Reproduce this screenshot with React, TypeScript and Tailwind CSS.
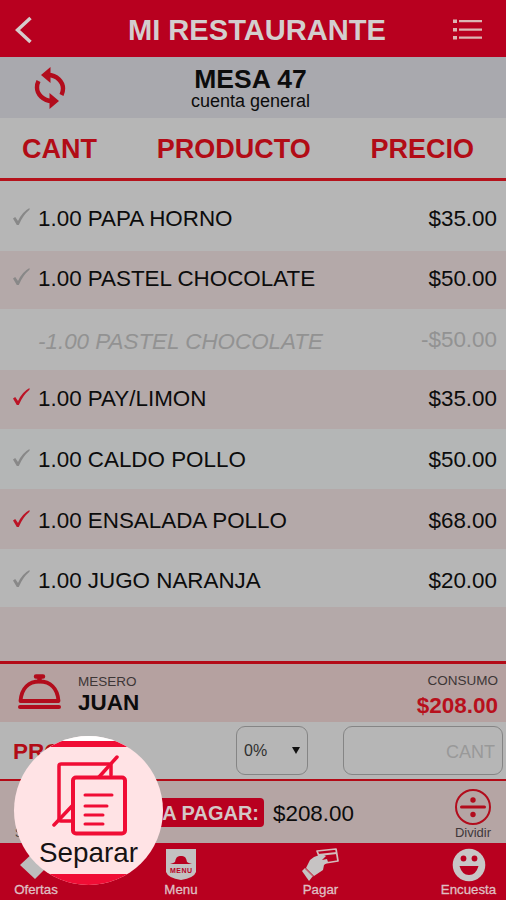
import { clsx } from "clsx"

type Item = {
    name: string
    price: string
    status: "pending" | "done" | "cancelled"
    row: string
}

const items: Item[] = [
    { name: "1.00 PAPA HORNO", price: "$35.00", status: "pending", row: "h-[70px] pt-[23px] bg-[#b6b6b6]" },
    { name: "1.00 PASTEL CHOCOLATE", price: "$50.00", status: "pending", row: "h-[58px] pt-[13px] bg-[#b4a9a9]" },
    { name: "-1.00 PASTEL CHOCOLATE", price: "-$50.00", status: "cancelled", row: "h-[61px] pt-[16px] bg-[#b6b6b6]" },
    { name: "1.00 PAY/LIMON", price: "$35.00", status: "done", row: "h-[59px] pt-[14px] bg-[#b4a9a9]" },
    { name: "1.00 CALDO POLLO", price: "$50.00", status: "pending", row: "h-[60px] pt-[16px] bg-[#b4b6b6]" },
    { name: "1.00 ENSALADA POLLO", price: "$68.00", status: "done", row: "h-[60px] pt-[17px] bg-[#b4a9a9]" },
    { name: "1.00 JUGO NARANJA", price: "$20.00", status: "pending", row: "h-[58px] pt-[17px] bg-[#b6b6b6]" },
]

const BackIcon = () => (
    <svg width="18" height="28" viewBox="0 0 18 28" fill="none" stroke="#d5cccc" strokeWidth="3.500">
        <path d="M15.500 2 2.500 14 15.500 26" />
    </svg>
)

const ListIcon = () => (
    <svg width="30" height="22" viewBox="0 0 30 22" fill="#dcb5b3">
        <path d="M0 0.500h4v3.500H0zM0 9h4v3.500H0zM0 17h4v3.500H0zM6 1h23v2.200H6zM6 9.500h23v2.200H6zM6 17.500h23v2.200H6z" />
    </svg>
)

const SyncIcon = () => (
    <svg width="32" height="42" viewBox="0 0 32 42" fill="none" stroke="#b20c1c" strokeWidth="4.400">
        <path d="M14 8C23 8 29 15 29 21.500Q29 25 27.500 28" />
        <path d="M18 34C9 34 3 27 3 20.500Q3 17 4.500 14" />
        <path d="M7 8 16.500 0v16z" fill="#b20c1c" stroke="none" />
        <path d="M25 34 15.500 26v16z" fill="#b20c1c" stroke="none" />
    </svg>
)

const CheckIcon = ({ active }: { active: boolean }) => (
    <svg width="17" height="18" viewBox="0 0 17 18" fill={active ? "#bb1426" : "#888"}>
        <path d="M0 10.500 2.200 9 5 13Q9 4 16.500 0L16.500 1.800Q10 7 5.800 17H3.800Z" />
    </svg>
)

const BellIcon = () => (
    <svg width="44" height="36" viewBox="0 0 44 36" fill="none" stroke="#b20c1c" strokeWidth="3.800" strokeLinecap="round">
        <path d="M3.500 27C4.500 14 12 7.500 22.500 7.500S40.500 14 41.500 27Z" strokeLinejoin="round" />
        <path d="M3 33h39" strokeWidth="4" />
        <path d="M19 2.500h7M22.500 3v4" strokeWidth="4.500" />
    </svg>
)

const DivideIcon = () => (
    <svg width="36" height="36" viewBox="0 0 36 36" fill="none" stroke="#b20c1c">
        <circle cx="18" cy="18" r="17" strokeWidth="2" />
        <path d="M6.500 18h23" strokeWidth="3" strokeLinecap="round" />
        <circle cx="18" cy="11" r="2.700" fill="#b20c1c" stroke="none" />
        <circle cx="18" cy="25.500" r="2.700" fill="#b20c1c" stroke="none" />
    </svg>
)

const SplitIcon = () => (
    <svg width="76" height="82" viewBox="0 0 76 82" fill="none" stroke="#f00d35" strokeWidth="3.500" strokeLinecap="round">
        <path d="M59 20V10.500Q59 9 57 9H9Q7 9 7 11V64Q7 66 9 66H20" />
        <path d="M47 22 65 2M20 51 2 70" strokeWidth="3.500" />
        <rect x="21" y="22.500" width="52" height="56" rx="3" strokeWidth="4" />
        <path d="M33 40H60M33 51H55M33 60H51M33 69H51" strokeWidth="3" />
    </svg>
)

const OffersIcon = () => (
    <svg width="32" height="32" viewBox="0 0 32 32" fill="#bdbdbd">
        <path d="M15 3 29 17 15 31 0 17Z" />
    </svg>
)

const MenuIcon = () => (
    <svg width="32" height="34" viewBox="0 0 32 34">
        <path d="M1 1h30v23q-2 6-15 8Q3 30 1 24Z" fill="#c3c1c1" />
        <path d="M5 16q4-1 5-2 1-7 6-6 5-1 6 6 1 1 5 2Z" fill="#b8001f" />
        <text x="16" y="24.500" textAnchor="middle" textLength="22" fontFamily="Liberation Sans, sans-serif" fontSize="7" fontWeight="700" fill="#b8001f">
            MENU
        </text>
    </svg>
)

const PayIcon = () => (
    <svg width="38" height="34" viewBox="0 0 38 34" fill="none">
        <path d="M15 3 34 1 36 13 20 15.500Z" stroke="#d4bcbc" strokeWidth="1.700" strokeLinejoin="round" />
        <path d="M16 7 35 5" stroke="#d4bcbc" strokeWidth="2" />
        <path d="M4 20 8 12 12 9 20 6 24 8 20 12 25 11 26 14 22 17 21 22 12 28Z" fill="#c6c3c3" />
        <path d="M3 20 11 28 7 33 0 23Z" fill="#c6c3c3" />
        <path d="M3 20.500 11 28.500" stroke="#c45a68" />
    </svg>
)

const SmileIcon = () => (
    <svg width="34" height="34" viewBox="0 0 34 34" fill="#b8001f">
        <circle cx="17" cy="17" r="16.300" fill="#c8c6c6" />
        <circle cx="11.500" cy="10.500" r="2.900" />
        <circle cx="22.500" cy="10.500" r="2.900" />
        <path d="M7.500 18h19q-2.500 9-9.500 9t-9.500-9Z" />
    </svg>
)

const ItemRow = ({ item }: { item: Item }) => (
    <div className={clsx("flex shrink-0 pl-[13px] pr-[9px] text-[22.4px] leading-[29px]", item.row)}>
        <div className="w-[25px] shrink-0 pt-[4px]">
            {item.status !== "cancelled" && <CheckIcon active={item.status === "done"} />}
        </div>
        <span
            className={clsx(
                "flex-1 whitespace-nowrap",
                item.status === "cancelled" ? "pt-[2px] text-[#929292] italic" : "text-[#0c0c0c]"
            )}
        >
            {item.name}
        </span>
        <span className={item.status === "cancelled" ? "text-[#929292]" : "text-[#0c0c0c]"}>{item.price}</span>
    </div>
)

const App = () => {
    return (
        <div className="relative flex h-[900px] w-[506px] flex-col overflow-hidden bg-[#b6b6b6] font-['Liberation_Sans',Arial,sans-serif] text-[#0c0c0c]">
            <header className="flex h-[57px] shrink-0 items-center justify-between bg-[#b8001f] pt-[3px] pr-[23px] pl-[15px]">
                <BackIcon />
                <h1 className="pl-[28px] text-[29.1px] leading-[34px] font-bold whitespace-nowrap text-[#d3cece]">MI RESTAURANTE</h1>
                <ListIcon />
            </header>

            <div className="grid h-[61px] shrink-0 grid-cols-[100px_1fr_100px] bg-[#a9a9ae]">
                <div className="pt-[10px] pl-[34px]">
                    <SyncIcon />
                </div>
                <div className="flex flex-col items-center pt-[9px] pr-[5px]">
                    <span className="text-[26.5px] leading-[26px] font-bold">MESA 47</span>
                    <span className="text-[18px] leading-[18px]">cuenta general</span>
                </div>
            </div>

            <div className="flex h-[63px] shrink-0 justify-between border-b-3 border-[#b5121b] pt-[16px] pr-[32px] pl-[22px] text-[27px] leading-[30px] font-bold text-[#b20c16]">
                <span>CANT</span>
                <span>PRODUCTO</span>
                <span>PRECIO</span>
            </div>

            <main className="flex h-[480px] shrink-0 flex-col bg-[#b4a9a9]">
                {items.map((item) => (
                    <ItemRow key={item.name} item={item} />
                ))}
            </main>

            <section className="flex h-[61px] shrink-0 border-t-3 border-[#b30b17] bg-[#b5a1a0] pr-[8px] pl-[17px]">
                <div className="pt-[10px]">
                    <BellIcon />
                </div>
                <div className="flex flex-col pt-[10px] pl-[17px]">
                    <span className="text-[13.5px] leading-[16px] text-[#3d3636]">MESERO</span>
                    <span className="text-[22.5px] leading-[25px] font-bold">JUAN</span>
                </div>
                <div className="flex flex-1 flex-col items-end pt-[9px]">
                    <span className="text-[13.5px] leading-[16px] text-[#3d3636]">CONSUMO</span>
                    <span className="pt-[4px] text-[22.5px] leading-[26px] font-bold text-[#b8101c]">$208.00</span>
                </div>
            </section>

            <section className="flex h-[57px] shrink-0 pt-[4px] pr-[3px] pl-[13px]">
                <span className="w-[223px] pt-[13px] text-[22.5px] leading-[26px] font-bold text-[#b20c16]">PROPINA</span>
                <div className="flex h-[49px] w-[72px] items-center justify-between rounded-[9px] border border-[#858585] px-[7px] text-[16px] text-[#303030]">
                    0%
                    <svg width="8" height="7" viewBox="0 0 8 7">
                        <path d="M0 0h8L4 7Z" fill="#111" />
                    </svg>
                </div>
                <div className="ml-auto flex h-[49px] w-[160px] items-center justify-end rounded-[9px] border border-[#858585] pt-[3px] pr-[7px] text-[18px] text-[#999]">
                    CANT
                </div>
            </section>

            <section className="flex h-[64px] shrink-0 border-t-2 border-[#b30b17] bg-[#b5a5a4] pr-[15px] pl-[15px]">
                <div className="w-[59px] pt-[45px] text-[12px] leading-[14px] text-[#40383a]">Separar</div>
                <div className="mt-[17px] flex h-[29px] w-[190px] items-center justify-end rounded-[4px] bg-[#b8001f] pr-[5px] text-[20px] font-bold whitespace-nowrap text-[#d3c7c7]">
                    TOTAL A PAGAR:
                </div>
                <span className="pt-[19px] pl-[9px] text-[22.4px] leading-[28px]">$208.00</span>
                <div className="ml-auto flex flex-col items-center pt-[8px]">
                    <DivideIcon />
                    <span className="text-[13px] leading-[16px] text-[#40383a]">Dividir</span>
                </div>
            </section>

            <nav className="flex h-[57px] shrink-0 justify-between bg-[#b8001f] pt-[5px] pr-[9px] pl-[13px] text-[13.3px] leading-[14px] text-[#dfbfc2] [-webkit-text-stroke:0.3px_#dfbfc2]">
                <div className="flex w-[46px] flex-col items-center">
                    <OffersIcon />
                    <span className="mt-auto pb-[3px]">Ofertas</span>
                </div>
                <div className="flex w-[50px] flex-col items-center pl-[4px]">
                    <MenuIcon />
                    <span className="mt-auto pb-[3px]">Menu</span>
                </div>
                <div className="flex w-[46px] flex-col items-center pr-[3px]">
                    <PayIcon />
                    <span className="mt-auto pb-[3px]">Pagar</span>
                </div>
                <div className="flex w-[57px] flex-col items-center">
                    <SmileIcon />
                    <span className="mt-auto pb-[3px]">Encuesta</span>
                </div>
            </nav>

            {/* spotlight over the "Separar" action */}
            <div className="absolute top-[736px] left-[14px] flex h-[149px] w-[149px] flex-col items-center overflow-hidden rounded-full bg-[#ffe3e5]">
                <div className="h-[11px] w-full shrink-0 border-b-6 border-[#f00d35] bg-white" />
                <div className="pt-[8px] pl-[2px]">
                    <SplitIcon />
                </div>
                <span className="pt-[1px] text-[27.8px] leading-[30px] text-[#161213]">Separar</span>
                <div className="mt-auto h-[11px] w-full shrink-0 bg-[#f00d35]" />
            </div>
        </div>
    )
}

export default App
